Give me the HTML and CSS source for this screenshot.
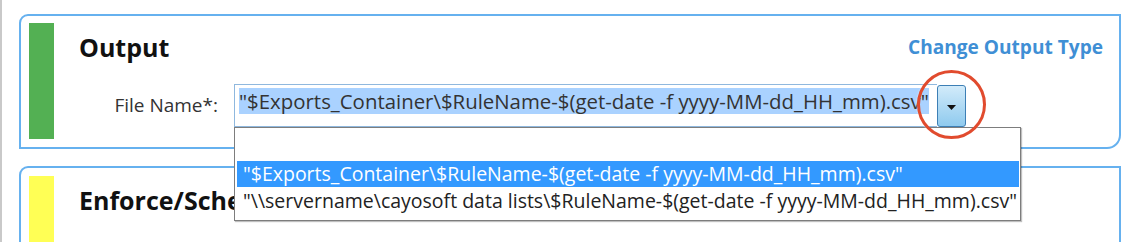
FILE: index.html
```html
<!DOCTYPE html>
<html lang="en">
<head>
<meta charset="utf-8">
<title>Output settings</title>
<link rel="stylesheet" href="styles.css">
</head>
<body>
<div class="page">
  <section class="card card-output">
    <div class="bar bar-green"></div>
    <div class="content">
      <div class="head">
        <h2 class="title">Output</h2>
        <a class="link" href="#">Change Output Type</a>
      </div>
      <div class="row">
        <label class="label">File Name*:</label>
        <div class="combo">
          <div class="input"><span class="sel">"$Exports_Container\$RuleName-$(get-date -f yyyy-MM-dd_HH_mm).csv"</span></div>
          <div class="btn">
            <svg class="tri" width="9" height="5" viewBox="0 0 9 5"><polygon points="0,0 9,0 4.5,5" fill="#111"/></svg>
          </div>
          <div class="circle"></div>
          <ul class="list">
            <li class="item item-empty"></li>
            <li class="item item-selected">"$Exports_Container\$RuleName-$(get-date -f yyyy-MM-dd_HH_mm).csv"</li>
            <li class="item">"\\servername\cayosoft data lists\$RuleName-$(get-date -f yyyy-MM-dd_HH_mm).csv"</li>
          </ul>
        </div>
      </div>
    </div>
  </section>
  <section class="card card-enforce">
    <div class="bar bar-yellow"></div>
    <div class="content">
      <div class="head">
        <h2 class="title">Enforce/Schedule</h2>
      </div>
    </div>
  </section>
</div>
</body>
</html>
```
FILE: styles.css
```css
html, body {
  margin: 0;
  padding: 0;
  background: #ffffff;
}

body {
  font-family: "Open Sans", "Noto Sans", sans-serif;
  color: #333333;
}

.page {
  height: 242px;
  box-sizing: border-box;
  border-left: 2px solid #c9c9c9;
  padding: 14px 0 0 17px;
  display: flex;
  flex-direction: column;
  gap: 17px;
  overflow: hidden;
}

.card {
  width: 1102px;
  box-sizing: border-box;
  border: 2px solid #66b1ef;
  display: flex;
  padding: 7px 16px 8px 8px;
  flex: none;
}

.card-output {
  height: 135px;
  border-radius: 9px 0 14px 0;
}

.card-enforce {
  height: 120px;
  border-bottom: none;
  border-radius: 9px 0 0 0;
  padding-top: 8px;
}

.bar {
  width: 25px;
  flex: none;
}

.bar-green { background: #53b053; }
.bar-yellow { background: #ffff55; }

.content {
  flex: 1;
  margin-left: 25px;
  display: flex;
  flex-direction: column;
}

.head {
  display: flex;
  justify-content: space-between;
  align-items: center;
  height: 34px;
  margin-top: 7px;
}

.title {
  margin: 0;
  font-size: 25px;
  line-height: 34px;
  font-weight: 700;
  color: #111111;
  white-space: nowrap;
}

.link {
  font-size: 19.1px;
  font-weight: 700;
  color: #3f8fd5;
  text-decoration: none;
}

.row {
  display: flex;
  align-items: flex-start;
  margin-top: 20px;
  gap: 16px;
}

.label {
  width: 139px;
  text-align: right;
  font-size: 19px;
  line-height: 43px;
  color: #333333;
}

.combo {
  position: relative;
  width: 732px;
  height: 43px;
  display: flex;
}

.input {
  flex: 1;
  border: 1px solid #8fb8de;
  border-right: none;
  padding: 3px 0 0 4px;
  overflow: hidden;
  white-space: nowrap;
}

.sel {
  background: #aad2ff;
  color: #333333;
  font-size: 20.4px;
  line-height: 26px;
  display: inline-block;
}

.btn {
  width: 29px;
  height: 42px;
  box-sizing: border-box;
  margin-top: 1px;
  border: 1px solid #3d7fb5;
  border-radius: 3px;
  background: linear-gradient(#d2ebfa, #8fcaee);
  display: flex;
  align-items: center;
  justify-content: center;
}

.tri {
  display: block;
  margin-top: 2px;
}

.circle {
  position: absolute;
  left: 683px;
  top: -14px;
  width: 69px;
  height: 69px;
  box-sizing: border-box;
  border: 3px solid #e14b2e;
  border-radius: 50%;
  box-shadow: 0 0 2px rgba(255, 255, 255, 0.9);
  z-index: 6;
}

.list {
  position: absolute;
  left: 0;
  top: 43px;
  width: 787px;
  height: 94px;
  box-sizing: border-box;
  margin: 0;
  padding: 0;
  list-style: none;
  background: #ffffff;
  border: 1px solid #7d7d7d;
  box-shadow: 1px 1px 1px rgba(0, 0, 0, 0.25);
  z-index: 5;
}

.item {
  margin: 0 1px 0 2px;
  padding-left: 6px;
  font-size: 19.5px;
  line-height: 28px;
  height: 28px;
  white-space: nowrap;
  color: #222222;
}

.item-empty {
  height: 33px;
}

.item-selected {
  height: 26px;
  line-height: 26px;
  background: #3399ff;
  color: #ffffff;
}
```
